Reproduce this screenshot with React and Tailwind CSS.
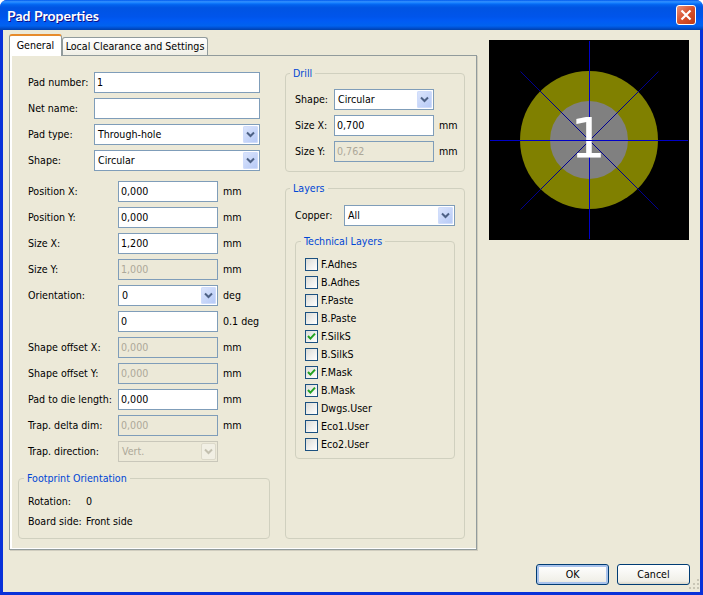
const Chevron = ({ disabled }) => (
  <span className={`flex h-[17px] w-[15px] items-center justify-center rounded-[2px] ${disabled ? "border border-[#dcd9ca] bg-[#f1efe4]" : "bg-[linear-gradient(135deg,#dde6fc,#b4c8f6)] shadow-[inset_0_0_0_1px_#cfdcfb]"}`}>
    <svg width="9" height="7" viewBox="0 0 9 7">
      <path d="M1 1.5 L4.5 5 L8 1.5" fill="none" stroke={disabled ? "#c3c0b0" : "#4d6185"} strokeWidth="2" />
    </svg>
  </span>
);

const Input = ({ value = "", disabled, w }) => (
  <div className={`flex h-[21px] shrink-0 items-center border border-[#7f9db9] pl-[2px] ${w} ${disabled ? "bg-[#ece9d8] text-[#aca899]" : "bg-white"}`}>{value}</div>
);

const Select = ({ value, w, disabled }) => (
  <div className={`flex h-[21px] shrink-0 items-center justify-between border pl-[3px] pr-[1px] ${w} ${disabled ? "border-[#c9c7ba] bg-[#ece9d8] text-[#aca899]" : "border-[#7f9db9] bg-white"}`}>
    <span>{value}</span>
    <Chevron disabled={disabled} />
  </div>
);

const Row = ({ label, lw, unit, children }) => (
  <div className="flex h-[21px] items-center">
    <span className={`shrink-0 ${lw}`}>{label}</span>
    {children}
    {unit && <span className="ml-[5px]">{unit}</span>}
  </div>
);

const Group = ({ title, className, legend, children }) => (
  <fieldset className={`rounded-[4px] border border-[#d0d0bf] pl-[9px] ${className}`}>
    <legend className={`h-[13px] px-[3px] leading-[13px] text-[#0046d5] ${legend}`}>{title}</legend>
    {children}
  </fieldset>
);

const Check = ({ label, checked }) => (
  <div className="flex h-[18px] items-center">
    <span className="flex h-[13px] w-[13px] items-center justify-center border border-[#1c5180] bg-[linear-gradient(135deg,#dcdcd7,#ffffff)]">
      {checked && (
        <svg width="9" height="9" viewBox="0 0 9 9">
          <path d="M1 4 L3.4 6.6 L8 1.6" fill="none" stroke="#21a121" strokeWidth="2" />
        </svg>
      )}
    </span>
    <span className="ml-[3px]">{label}</span>
  </div>
);

const layers = [
  ["F.Adhes"], ["B.Adhes"], ["F.Paste"], ["B.Paste"], ["F.SilkS", true], ["B.SilkS"],
  ["F.Mask", true], ["B.Mask", true], ["Dwgs.User"], ["Eco1.User"], ["Eco2.User"],
];

const Preview = () => (
  <svg width="200" height="200" viewBox="0 0 200 200" className="block bg-black">
    <circle cx="100" cy="100" r="69" fill="#808000" />
    <circle cx="100" cy="100" r="39" fill="#808080" />
    <path d="M100.5 1 V199" stroke="#0000c8" strokeWidth="1" />
    <path d="M31.5 31.5 L169.5 169.5 M169.5 31.5 L31.5 169.5" stroke="#000090" strokeWidth="1" />
    <text x="99" y="117" textAnchor="middle" fill="#fff" fontSize="56" fontFamily="'DejaVu Sans', sans-serif">1</text>
    <path d="M1 100.5 H199" stroke="#0000c8" strokeWidth="1" />
  </svg>
);

const Button = ({ children, primary }) => (
  <button className={`h-[21px] w-[73px] rounded-[3px] border border-[#003c74] bg-[linear-gradient(180deg,#ffffff,#f0efe8_85%,#d8d5c8)] ${primary ? "shadow-[inset_0_0_0_2px_#a9c3ec]" : ""}`}>{children}</button>
);

export default function App() {
  return (
    <div className="relative flex h-[595px] w-[703px] flex-col overflow-hidden whitespace-nowrap rounded-t-[7px] bg-[#0831d9] font-['DejaVu_Sans_Condensed','DejaVu_Sans',sans-serif] text-[10.6px] leading-none text-black">
      <div className="flex h-[30px] shrink-0 items-center justify-between bg-[linear-gradient(180deg,#0058ee_0%,#3593ff_6%,#127dff_10%,#0262ee_16%,#0054e3_26%,#0055eb_56%,#005bf5_70%,#0062ef_86%,#0052d6_92%,#0040ab_100%)] pl-[7px] pr-[7px]">
        <span className="pt-[2px] font-['Lato',sans-serif] text-[14px] font-bold text-white [text-shadow:1px_1px_0_#0f1089]">Pad Properties</span>
        <span className="flex h-[20px] w-[20px] items-center justify-center rounded-[3px] border border-white bg-[linear-gradient(135deg,#e8907a,#d8512c_50%,#c03a15)]">
          <svg width="12" height="12" viewBox="0 0 12 12">
            <path d="M1.5 1.5 L10.5 10.5 M10.5 1.5 L1.5 10.5" stroke="#fff" strokeWidth="2.2" />
          </svg>
        </span>
      </div>

      <div className="mx-[3px] mb-[3px] flex min-h-0 flex-1 flex-col bg-[#ece9d8]">
        <div className="flex pl-[6px] pt-[4px]">
          <div className="w-[468px] shrink-0">
            <div className="flex h-[21px] items-end">
              <div className="relative z-10 -mb-[1px] flex h-[22px] w-[53px] items-center justify-center rounded-t-[3px] border-x border-[#919b9c] border-t-[2px] border-t-[#e68b2c] bg-white pb-[2px]">General</div>
              <div className="flex h-[18px] w-[146px] items-center justify-center rounded-t-[3px] border border-b-0 border-[#919b9c] bg-[linear-gradient(180deg,#ffffff,#f0efe6)]">Local Clearance and Settings</div>
            </div>
            <div className="flex h-[495px] gap-[15px] border border-[#919b9c] pl-[8px] pr-[11px] shadow-[inset_2px_0_0_#fff,inset_0_-1px_0_#fff,1px_1px_0_#d0cdbf]">
              <div className="flex w-[252px] shrink-0 flex-col pt-[16px]">
                <div className="flex flex-col gap-[5px] pl-[10px]">
                  <Row label="Pad number:" lw="w-[66px]"><Input value="1" w="w-[166px]" /></Row>
                  <Row label="Net name:" lw="w-[66px]"><Input w="w-[166px]" /></Row>
                  <Row label="Pad type:" lw="w-[66px]"><Select value="Through-hole" w="w-[166px]" /></Row>
                  <Row label="Shape:" lw="w-[66px]"><Select value="Circular" w="w-[166px]" /></Row>
                </div>
                <div className="mt-[10px] flex flex-col gap-[5px] pl-[10px]">
                  <Row label="Position X:" lw="w-[90px]" unit="mm"><Input value="0,000" w="w-[100px]" /></Row>
                  <Row label="Position Y:" lw="w-[90px]" unit="mm"><Input value="0,000" w="w-[100px]" /></Row>
                  <Row label="Size X:" lw="w-[90px]" unit="mm"><Input value="1,200" w="w-[100px]" /></Row>
                  <Row label="Size Y:" lw="w-[90px]" unit="mm"><Input value="1,000" disabled w="w-[100px]" /></Row>
                  <Row label="Orientation:" lw="w-[90px]" unit="deg"><Select value="0" w="w-[100px]" /></Row>
                  <Row label="" lw="w-[90px]" unit="0.1 deg"><Input value="0" w="w-[100px]" /></Row>
                  <Row label="Shape offset X:" lw="w-[90px]" unit="mm"><Input value="0,000" disabled w="w-[100px]" /></Row>
                  <Row label="Shape offset Y:" lw="w-[90px]" unit="mm"><Input value="0,000" disabled w="w-[100px]" /></Row>
                  <Row label="Pad to die length:" lw="w-[90px]" unit="mm"><Input value="0,000" w="w-[100px]" /></Row>
                  <Row label="Trap. delta dim:" lw="w-[90px]" unit="mm"><Input value="0,000" disabled w="w-[100px]" /></Row>
                  <Row label="Trap. direction:" lw="w-[90px]"><Select value="Vert." disabled w="w-[100px]" /></Row>
                </div>
                <Group title="Footprint Orientation" legend="-ml-[4px]" className="mt-[10px] h-[67px] pt-[5px]">
                  <div className="flex h-[20px] items-center pt-[3px]"><span className="w-[58px]">Rotation:</span><span>0</span></div>
                  <div className="flex h-[20px] items-center pt-[3px]"><span className="w-[58px]">Board side:</span><span>Front side</span></div>
                </Group>
              </div>

              <div className="flex min-w-0 flex-1 flex-col pt-[11px]">
                <Group title="Drill" legend="-ml-[5px]" className="h-[105px] pt-[9px]">
                  <div className="flex flex-col gap-[5px]">
                    <Row label="Shape:" lw="w-[39px]"><Select value="Circular" w="w-[100px]" /></Row>
                    <Row label="Size X:" lw="w-[39px]" unit="mm"><Input value="0,700" w="w-[100px]" /></Row>
                    <Row label="Size Y:" lw="w-[39px]" unit="mm"><Input value="0,762" disabled w="w-[100px]" /></Row>
                  </div>
                </Group>
                <Group title="Layers" legend="-ml-[5px]" className="mt-[10px] h-[357px] pt-[10px]">
                  <Row label="Copper:" lw="w-[49px]"><Select value="All" w="w-[111px]" /></Row>
                  <Group title="Technical Layers" legend="-ml-[4px]" className="mt-[9px] mr-[9px] pt-[7px] pb-[5px]">
                    {layers.map(([n, c]) => <Check key={n} label={n} checked={c} />)}
                  </Group>
                </Group>
              </div>
            </div>
          </div>
          <div className="ml-[12px] pt-[6px]"><Preview /></div>
        </div>
        <div className="mt-[14px] flex justify-end gap-[8px] pr-[10px]">
          <Button primary>OK</Button>
          <Button>Cancel</Button>
        </div>
      </div>
      <svg width="11" height="11" viewBox="0 0 11 11" className="absolute bottom-[5px] right-[3px]">
        <path d="M8 0h2v2H8zM4 4h2v2H4zM8 4h2v2H8zM0 8h2v2H0zM4 8h2v2H4zM8 8h2v2H8z" fill="#c9c6b6" />
      </svg>
    </div>
  );
}
